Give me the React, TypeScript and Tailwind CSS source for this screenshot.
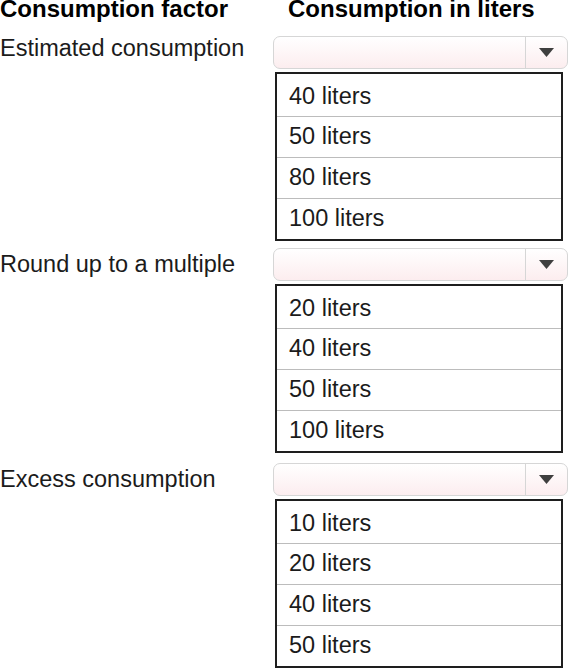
const sections = [
  {
    label: "Estimated consumption",
    labelPad: "pt-0",
    gap: "mt-[15px]",
    options: ["40 liters", "50 liters", "80 liters", "100 liters"],
  },
  {
    label: "Round up to a multiple",
    labelPad: "pt-[4px]",
    gap: "mt-[7px]",
    options: ["20 liters", "40 liters", "50 liters", "100 liters"],
  },
  {
    label: "Excess consumption",
    labelPad: "pt-[4px]",
    gap: "mt-[10px]",
    options: ["10 liters", "20 liters", "40 liters", "50 liters"],
  },
];

function Select() {
  return (
    <div className="flex h-[33px] w-[295px] rounded-[7px] border-[1.5px] border-[#d6d6d6] bg-linear-to-b from-white to-[#fcedef]">
      <div className="flex-1" />
      <div className="flex w-[42px] items-center justify-center border-l-[1.5px] border-[#d6d6d6]">
        <svg width="15" height="9" viewBox="0 0 15 9">
          <path d="M0 0 L15 0 L7.5 9 Z" fill="#3f3f3f" />
        </svg>
      </div>
    </div>
  );
}

function Options({ items }: { items: string[] }) {
  return (
    <div className="ml-[2px] mt-[3px] w-[288px] border-2 border-[#1e1e1e] bg-white pt-px">
      {items.map((item, i) => (
        <div
          key={item}
          className={`h-[41px] pl-3 text-[23.5px] leading-[24px] ${i === 0 ? "pt-[9px]" : "border-t border-[#bcbcbc] pt-[7px]"}`}
        >
          {item}
        </div>
      ))}
    </div>
  );
}

export default function App() {
  return (
    <div className="h-[668px] w-[569px] overflow-hidden bg-white font-['Liberation_Sans',Arial,sans-serif] text-[#1b1b1b]">
      <div className="-mt-[3px] flex text-[24px] font-bold leading-[24px] text-black">
        <span className="w-[288px]">Consumption factor</span>
        <span>Consumption in liters</span>
      </div>

      {sections.map((section) => (
        <div key={section.label} className={`flex ${section.gap}`}>
          <div className={`w-[273px] text-[23.5px] leading-[24px] ${section.labelPad}`}>{section.label}</div>
          <div>
            <Select />
            <Options items={section.options} />
          </div>
        </div>
      ))}
    </div>
  );
}
